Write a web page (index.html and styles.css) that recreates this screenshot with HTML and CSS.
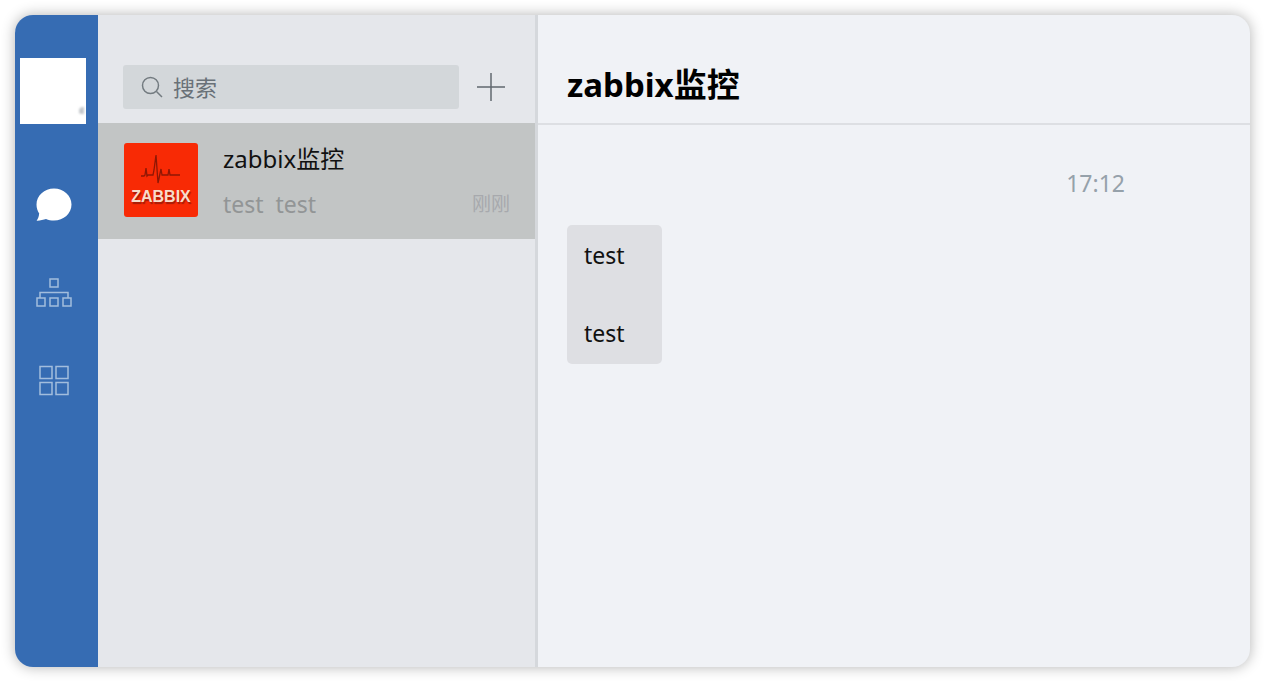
FILE: index.html
```html
<!DOCTYPE html>
<html lang="zh-CN">
<head>
<meta charset="utf-8">
<title>zabbix监控</title>
<link rel="stylesheet" href="styles.css">
</head>
<body>
<div class="window">
  <nav class="rail" aria-label="导航">
    <div class="avatar"><span class="avatar-mark"></span></div>
    <button class="rail-btn" type="button" aria-label="消息">
      <svg width="36" height="34" viewBox="0 0 36 34"><path fill="#fff" d="M18 .5C27.600 .5 35.500 7.500 35.500 16.500S27.600 32.500 18 32.500C15 32.500 12.500 32 10 31C7.500 31.500 4 33 .6 32.800C2.200 30.500 3 28 3.200 25.500C1.500 22.700 .5 20 .5 16.500C.5 7.500 8.400 .5 18 .5Z"/></svg>
    </button>
    <button class="rail-btn" type="button" aria-label="通讯录">
      <svg class="line" width="36" height="30" viewBox="0 0 36 30"><path d="M14 1h8v8h-8zM1 20h8v8H1zM14 20h8v8h-8zM27 20h8v8h-8zM4 20v-5.500h28v5.500"/></svg>
    </button>
    <button class="rail-btn" type="button" aria-label="应用">
      <svg class="line" width="32" height="32" viewBox="0 0 32 32"><path d="M2 1.500h12v12H2zM18 1.500h12v12H18zM2 17.500h12v12H2zM18 17.500h12v12H18z"/></svg>
    </button>
  </nav>
  <aside class="chats">
    <div class="toolbar">
      <label class="search">
        <svg width="22" height="22" viewBox="0 0 22 22"><circle cx="9.500" cy="9.500" r="8"/><path d="M15.500 15.500L21 21"/></svg>
        <input type="text" placeholder="搜索" aria-label="搜索">
      </label>
      <button class="add" type="button" aria-label="添加">
        <svg width="28" height="28" viewBox="0 0 28 28"><path d="M14 0v28M0 14h28"/></svg>
      </button>
    </div>
    <a class="chat" href="#chat">
      <span class="logo">
        <svg width="46" height="32" viewBox="0 0 46 32"><path d="M3 23h3l1-1 1-7 1 8 1-1h5l1-5 2-15 2 28 3-14 1 6h6l1-6 1 6h10"/></svg>
        <span class="logo-name">ZABBIX</span>
      </span>
      <span class="chat-info">
        <span class="chat-name">zabbix监控</span>
        <span class="chat-row"><span class="preview">test&nbsp; test</span><span class="ago">刚刚</span></span>
      </span>
    </a>
  </aside>
  <main class="talk" id="chat">
    <header class="talk-head"><h1>zabbix监控</h1></header>
    <div class="messages">
      <time class="time">17:12</time>
      <div class="bubble">test<br><br>test</div>
    </div>
  </main>
</div>
</body>
</html>
```
FILE: styles.css
```css
* { box-sizing: border-box; }
body {
  margin: 0;
  padding: 15px;
  height: 100vh;
  background: #fff;
  font-family: "Noto Sans", "Noto Sans CJK SC", sans-serif;
  font-size: 23px;
}
button { padding: 0; border: 0; background: none; }
svg { display: block; fill: none; flex: none; }
.window {
  display: flex;
  height: 100%;
  border-radius: 18px;
  overflow: hidden;
  background: #f0f2f6;
  box-shadow: 0 0 14px rgba(0, 0, 0, .3);
}
.rail {
  flex: none;
  width: 83px;
  padding: 43px 5px 0;
  background: #366cb3;
}
.avatar {
  display: flex;
  justify-content: flex-end;
  align-items: flex-end;
  width: 66px;
  height: 66px;
  margin-bottom: 37px;
  padding: 10px 2px;
  background: #fff;
}
.avatar-mark {
  width: 5px;
  height: 7px;
  border-radius: 4px 0 0 2px;
  background: #c4c8cc;
  filter: blur(1px);
}
.rail-btn {
  display: flex;
  align-items: center;
  justify-content: center;
  width: 68px;
  height: 88px;
}
.line { stroke: #a2bddd; stroke-width: 1.5; }
.chats {
  flex: none;
  width: 440px;
  background: #e5e7eb;
  border-right: 3px solid #d5d8dc;
}
.toolbar {
  display: flex;
  align-items: center;
  gap: 18px;
  height: 108px;
  padding: 49px 30px 14px 25px;
}
.search {
  display: flex;
  flex: 1;
  align-items: center;
  gap: 10px;
  min-width: 0;
  height: 44px;
  padding: 0 18px;
  border-radius: 3px;
  background: #d3d7da;
}
.search svg { stroke: #737b80; stroke-width: 1.5; }
.search input {
  flex: 1;
  min-width: 0;
  padding: 0;
  border: 0;
  outline: 0;
  background: none;
  color: #222;
  font: 22px/32px "Noto Sans", "Noto Sans CJK SC", sans-serif;
}
.search input::placeholder { color: #697178; opacity: 1; }
.add svg { stroke: #60686f; stroke-width: 1.5; }
.chat {
  display: flex;
  gap: 25px;
  padding: 20px 25px 18px 26px;
  background: #c2c5c5;
  color: #111;
  text-decoration: none;
}
.logo {
  display: flex;
  flex: none;
  flex-direction: column;
  align-items: center;
  width: 74px;
  height: 74px;
  padding-top: 10px;
  border-radius: 3px;
  background: #f82a05;
}
.logo svg { stroke: #8e1705; stroke-width: 1.3; }
.logo-name {
  color: #f7dccb;
  font: bold 16px/24px "Liberation Sans", Arial, sans-serif;
  text-shadow: 1px 2px 1px #a51c08;
}
.chat-info { flex: 1; min-width: 0; }
.chat-name { display: block; font-size: 24px; line-height: 32px; }
.chat-row {
  display: flex;
  align-items: center;
  justify-content: space-between;
  margin-top: 12px;
  line-height: 34px;
}
.preview { color: #929596; }
.ago { color: #a7a9ad; font-size: 19px; }
.talk { flex: 1; min-width: 0; }
.talk-head {
  height: 110px;
  padding: 48px 29px 0;
  border-bottom: 2px solid #dddfe3;
}
h1 { margin: 0; color: #000; font-size: 33px; line-height: 44px; }
.messages {
  display: flex;
  flex-direction: column;
  align-items: flex-start;
  gap: 25px;
  padding: 41px 125px 0 29px;
}
.time { align-self: flex-end; color: #96a1aa; line-height: 34px; }
.bubble {
  min-width: 95px;
  padding: 11px 17px;
  border-radius: 5px;
  background: #dedfe3;
  color: #111;
  line-height: 39px;
}
```
